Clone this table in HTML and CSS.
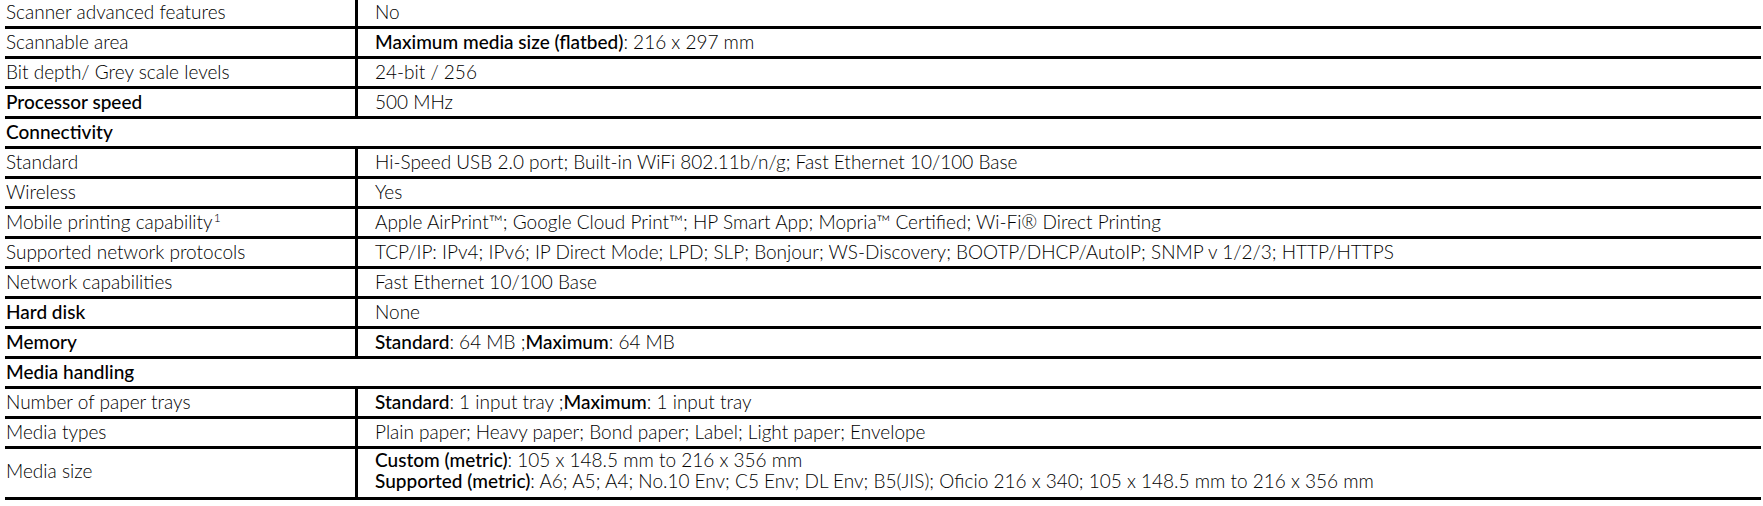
FILE: index.html
```html
<!DOCTYPE html>
<html lang="en">
<head>
<meta charset="utf-8">
<title>Specifications</title>
<link rel="stylesheet" href="styles.css">
</head>
<body>
<table class="spec">
  <colgroup><col class="col-key"><col class="col-val"></colgroup>
  <tbody>
    <tr><td class="k">Scanner advanced features</td><td class="v">No</td></tr>
    <tr><td class="k">Scannable area</td><td class="v"><b>Maximum media size (flatbed)</b>: 216 x 297 mm</td></tr>
    <tr><td class="k">Bit depth/ Grey scale levels</td><td class="v">24-bit / 256</td></tr>
    <tr><td class="k"><b>Processor speed</b></td><td class="v">500 MHz</td></tr>
    <tr class="sec"><td colspan="2"><b>Connectivity</b></td></tr>
    <tr><td class="k">Standard</td><td class="v">Hi-Speed USB 2.0 port; Built-in WiFi 802.11b/n/g; Fast Ethernet 10/100 Base</td></tr>
    <tr><td class="k">Wireless</td><td class="v">Yes</td></tr>
    <tr><td class="k">Mobile printing capability<sup class="fn">1</sup></td><td class="v">Apple AirPrint™; Google Cloud Print™; HP Smart App; Mopria™ Certified; Wi-Fi® Direct Printing</td></tr>
    <tr><td class="k">Supported network protocols</td><td class="v">TCP/IP: IPv4; IPv6; IP Direct Mode; LPD; SLP; Bonjour; WS-Discovery; BOOTP/DHCP/AutoIP; SNMP v 1/2/3; HTTP/HTTPS</td></tr>
    <tr><td class="k">Network capabilities</td><td class="v">Fast Ethernet 10/100 Base</td></tr>
    <tr><td class="k"><b>Hard disk</b></td><td class="v">None</td></tr>
    <tr><td class="k"><b>Memory</b></td><td class="v"><b>Standard</b>: 64 MB ;<b>Maximum</b>: 64 MB</td></tr>
    <tr class="sec"><td colspan="2"><b>Media handling</b></td></tr>
    <tr><td class="k">Number of paper trays</td><td class="v"><b>Standard</b>: 1 input tray ;<b>Maximum</b>: 1 input tray</td></tr>
    <tr><td class="k">Media types</td><td class="v">Plain paper; Heavy paper; Bond paper; Label; Light paper; Envelope</td></tr>
    <tr class="tall"><td class="k">Media size</td><td class="v multi"><b>Custom (metric)</b>: 105 x 148.5 mm to 216 x 356 mm<br><b>Supported (metric)</b>: A6; A5; A4; No.10 Env; C5 Env; DL Env; B5(JIS); Oficio 216 x 340; 105 x 148.5 mm to 216 x 356 mm</td></tr>
  </tbody>
</table>
</body>
</html>
```
FILE: styles.css
```css
html, body {
  margin: 0;
  padding: 0;
  background: #fff;
}

body {
  font-family: Lato, "Open Sans", "Liberation Sans", sans-serif;
  font-weight: 300;
  font-size: 19px;
  color: #000;
}

.spec {
  table-layout: fixed;
  border-collapse: separate;
  border-spacing: 0;
  width: 1756px;
  margin: -1px 0 0 5px;
}

.col-key {
  width: 353px;
}

.spec td {
  box-sizing: border-box;
  height: 30px;
  padding: 0 0 2px 1px;
  border-bottom: 3px solid #000;
  vertical-align: middle;
  white-space: nowrap;
  line-height: 25px;
}

.spec td.k {
  border-right: 3px solid #000;
}

.spec td.v {
  padding-left: 17px;
}

.spec b {
  font-weight: 500;
  color: #000;
}

.fn {
  font-size: 12px;
  line-height: 0;
  vertical-align: 7px;
  margin-left: 1px;
}

.tall td {
  height: 51px;
}

.tall td.k {
  padding-bottom: 5px;
}

.spec td.multi {
  vertical-align: top;
  padding-top: 0;
  padding-bottom: 0;
  line-height: 21px;
}
```
